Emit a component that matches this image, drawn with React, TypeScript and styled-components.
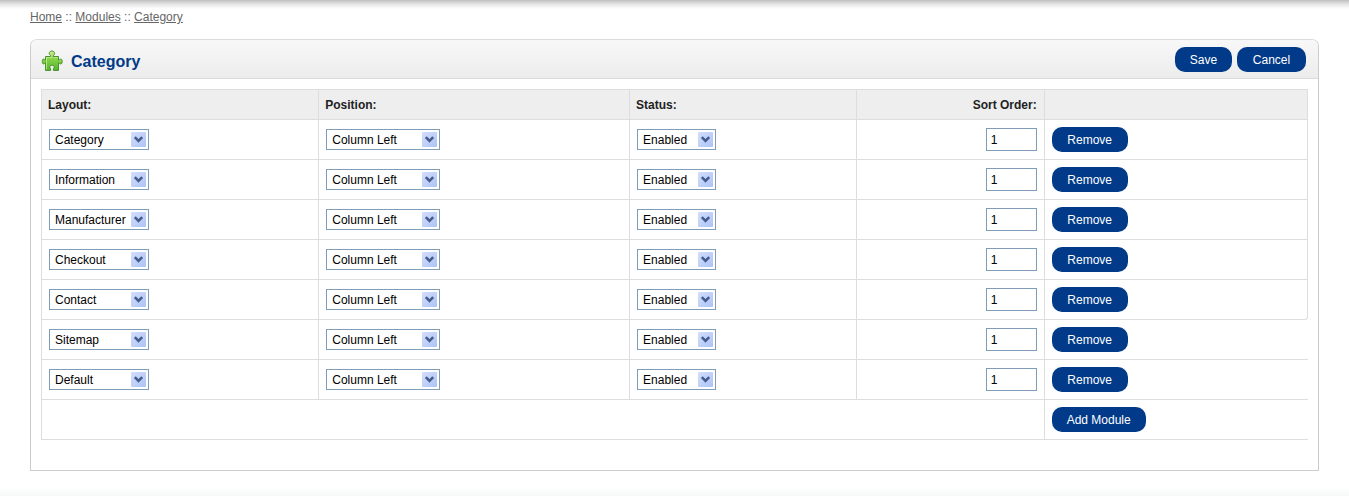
import React from "react";
import styled, { createGlobalStyle } from "styled-components";

const GlobalStyle = createGlobalStyle`
  *, *::before, *::after { box-sizing: border-box; }
  body {
    margin: 0;
    background: #fff;
    color: #000;
    font-family: "Liberation Sans", Arial, sans-serif;
    font-size: 12px;
  }
`;

const Page = styled.div`
  min-height: 100vh;
  padding: 10px 30px 25px;
  background:
    linear-gradient(#bfbfbf, #e4e4e4 45%, #fff) top / 100% 9px no-repeat,
    linear-gradient(#fff, #f7f9f8) bottom / 100% 10px no-repeat,
    #fff;
`;

const Breadcrumb = styled.nav`
  height: 29px;
  line-height: 14px;
  color: #666;
`;

const Crumb = styled.a`
  color: #666;
  text-decoration: underline;
`;

const Panel = styled.section`
  border: 1px solid #ccc;
  border-top-color: #dbdbdb;
  border-radius: 7px 7px 0 0;
`;

const PanelHeader = styled.header`
  display: flex;
  align-items: center;
  gap: 8px;
  height: 39px;
  padding: 0 12px 0 10px;
  border-bottom: 1px solid #dbdbdb;
  border-radius: 6px 6px 0 0;
  background: linear-gradient(#f8f8f8, #ececec);
`;

const PuzzleIcon = styled.svg`
  width: 22px;
  height: 22px;
  margin-top: 4px;
`;

const Title = styled.h1`
  flex: 1;
  margin: 6px 0 0;
  color: #003a88;
  font-size: 16px;
  line-height: 18px;
`;

const Actions = styled.div`
  display: flex;
  gap: 5px;
`;

const Button = styled.button<{ $width: number }>`
  display: block;
  width: ${(p) => p.$width}px;
  height: 25px;
  padding: 1px 0 0;
  border: 0;
  border-radius: 10px;
  background: #003a88;
  color: #fff;
  font: inherit;
  line-height: 24px;
  text-align: center;
  cursor: pointer;
`;

const PanelBody = styled.div`
  padding: 10px 10px 30px;
`;

const Table = styled.table`
  width: 100%;
  table-layout: fixed;
  border-collapse: separate;
  border-spacing: 0;
  border-top: 1px solid #ddd;
  border-left: 1px solid #ddd;
`;

const Col = styled.col<{ $share?: number }>`
  width: ${(p) => (p.$share ? `${p.$share}%` : "auto")};
`;

const HeadCell = styled.th<{ $align?: string }>`
  height: 30px;
  padding: 0 7px 0 6px;
  border-right: 1px solid #ddd;
  border-bottom: 1px solid #ddd;
  background: #eee;
  color: #222;
  text-align: ${(p) => p.$align ?? "left"};
`;

const Cell = styled.td<{ $align?: string; $edge?: "open" | "corner" }>`
  height: 40px;
  padding: 0 7px;
  border-right: ${(p) => (p.$edge === "open" ? "0" : "1px solid #ddd")};
  border-bottom: 1px solid #ddd;
  border-bottom-right-radius: ${(p) => (p.$edge === "corner" ? "3px" : "0")};
  text-align: ${(p) => p.$align ?? "left"};
`;

const SelectBox = styled.div<{ $width: number }>`
  position: relative;
  width: ${(p) => p.$width}px;
  height: 21px;
`;

const NativeSelect = styled.select`
  appearance: none;
  display: block;
  width: 100%;
  height: 100%;
  padding: 0 0 0 5px;
  border: 1px solid #7f9db9;
  border-radius: 0;
  background: #fff;
  color: #000;
  font: inherit;
`;

const Arrow = styled.svg`
  position: absolute;
  top: 3px;
  right: 3px;
  width: 15px;
  height: 15px;
  border-radius: 1px;
  background: linear-gradient(135deg, #d3defd, #adc3f5);
  pointer-events: none;
`;

const NumberField = styled.input`
  width: 51px;
  height: 23px;
  padding: 0 4px;
  border: 1px solid #7f9db9;
  border-radius: 0;
  background: #fff;
  color: #000;
  font: inherit;
  vertical-align: middle;
`;

const layouts = ["Category", "Information", "Manufacturer", "Checkout", "Contact", "Sitemap", "Default"];
const positions = ["Content Top", "Content Bottom", "Column Left", "Column Right"];
const statuses = ["Enabled", "Disabled"];

function Select({ label, value, options, width }: { label: string; value: string; options: string[]; width: number }) {
  return (
    <SelectBox $width={width}>
      <NativeSelect aria-label={label} defaultValue={value}>
        {options.map((o) => (
          <option key={o}>{o}</option>
        ))}
      </NativeSelect>
      <Arrow viewBox="0 0 15 15" aria-hidden="true">
        <path d="M3.8 5.2 7.5 8.9 11.2 5.2" fill="none" stroke="#455d8c" strokeWidth="2.6" />
      </Arrow>
    </SelectBox>
  );
}

export default function App() {
  return (
    <>
      <GlobalStyle />
      <Page>
        <Breadcrumb aria-label="Breadcrumb">
          <Crumb href="#home">Home</Crumb> :: <Crumb href="#modules">Modules</Crumb> ::{" "}
          <Crumb href="#category">Category</Crumb>
        </Breadcrumb>
        <Panel>
          <PanelHeader>
            <PuzzleIcon viewBox="0 0 22 22" aria-hidden="true">
              <defs>
                <linearGradient id="leaf" x1="0" y1="0" x2="0" y2="1">
                  <stop offset="0" stopColor="#c9ef8c" />
                  <stop offset="0.45" stopColor="#83d044" />
                  <stop offset="1" stopColor="#52b52a" />
                </linearGradient>
              </defs>
              <path
                d="M4.5 6.5H9.6V5.6C8.8 5 8.2 4.3 8.2 3.4C8.2 2 9.3 1 10.9 1S13.6 2 13.6 3.4C13.6 4.3 13 5 12.2 5.6V6.5H17.5V10.1H18.2C18.6 9.4 19.1 9 19.7 9C20.7 9 21.2 10.1 21.2 11.5S20.7 14 19.7 14C19.1 14 18.6 13.6 18.2 12.9H17.5V20.4H12.4V18.6C12.9 18.2 13.2 17.7 13.2 17.1C13.2 15.9 12.3 15.2 11 15.2S8.8 15.9 8.8 17.1C8.8 17.7 9.1 18.2 9.6 18.6V20.4H4.5V12.9H3.8C3.4 13.6 3 14 2.5 14C1.7 14 1.3 12.9 1.3 11.5S1.7 9 2.5 9C3 9 3.4 9.4 3.8 10.1H4.5Z"
                fill="url(#leaf)"
                stroke="#4a8f30"
                strokeWidth="1"
                strokeLinejoin="round"
              />
              <path
                d="M5.5 19.4V7.5H10.6V5M9.4 3.2Q9.7 2 11.2 2M13 7.5H16.5M18.6 11Q19 10 19.7 10"
                fill="none"
                stroke="#c4ee8e"
                strokeWidth="0.8"
              />
            </PuzzleIcon>
            <Title>Category</Title>
            <Actions>
              <Button type="button" $width={57}>Save</Button>
              <Button type="button" $width={69}>Cancel</Button>
            </Actions>
          </PanelHeader>
          <PanelBody>
            <Table>
              <colgroup>
                <Col $share={21.9} />
                <Col $share={24.55} />
                <Col $share={17.9} />
                <Col $share={14.85} />
                <Col />
              </colgroup>
              <thead>
                <tr>
                  <HeadCell scope="col">Layout:</HeadCell>
                  <HeadCell scope="col">Position:</HeadCell>
                  <HeadCell scope="col">Status:</HeadCell>
                  <HeadCell scope="col" $align="right">Sort Order:</HeadCell>
                  <HeadCell as="td" />
                </tr>
              </thead>
              <tbody>
                {layouts.map((layout, i) => (
                  <tr key={layout}>
                    <Cell>
                      <Select label={`Layout, row ${i + 1}`} value={layout} options={layouts} width={100} />
                    </Cell>
                    <Cell>
                      <Select label={`Position, row ${i + 1}`} value="Column Left" options={positions} width={114} />
                    </Cell>
                    <Cell>
                      <Select label={`Status, row ${i + 1}`} value="Enabled" options={statuses} width={79} />
                    </Cell>
                    <Cell $align="right">
                      <NumberField type="text" aria-label={`Sort order, row ${i + 1}`} defaultValue="1" />
                    </Cell>
                    <Cell $edge={i > 4 ? "open" : i === 4 ? "corner" : undefined}>
                      <Button type="button" $width={76}>Remove</Button>
                    </Cell>
                  </tr>
                ))}
              </tbody>
              <tfoot>
                <tr>
                  <Cell colSpan={4} />
                  <Cell $edge="open">
                    <Button type="button" $width={94}>Add Module</Button>
                  </Cell>
                </tr>
              </tfoot>
            </Table>
          </PanelBody>
        </Panel>
      </Page>
    </>
  );
}
